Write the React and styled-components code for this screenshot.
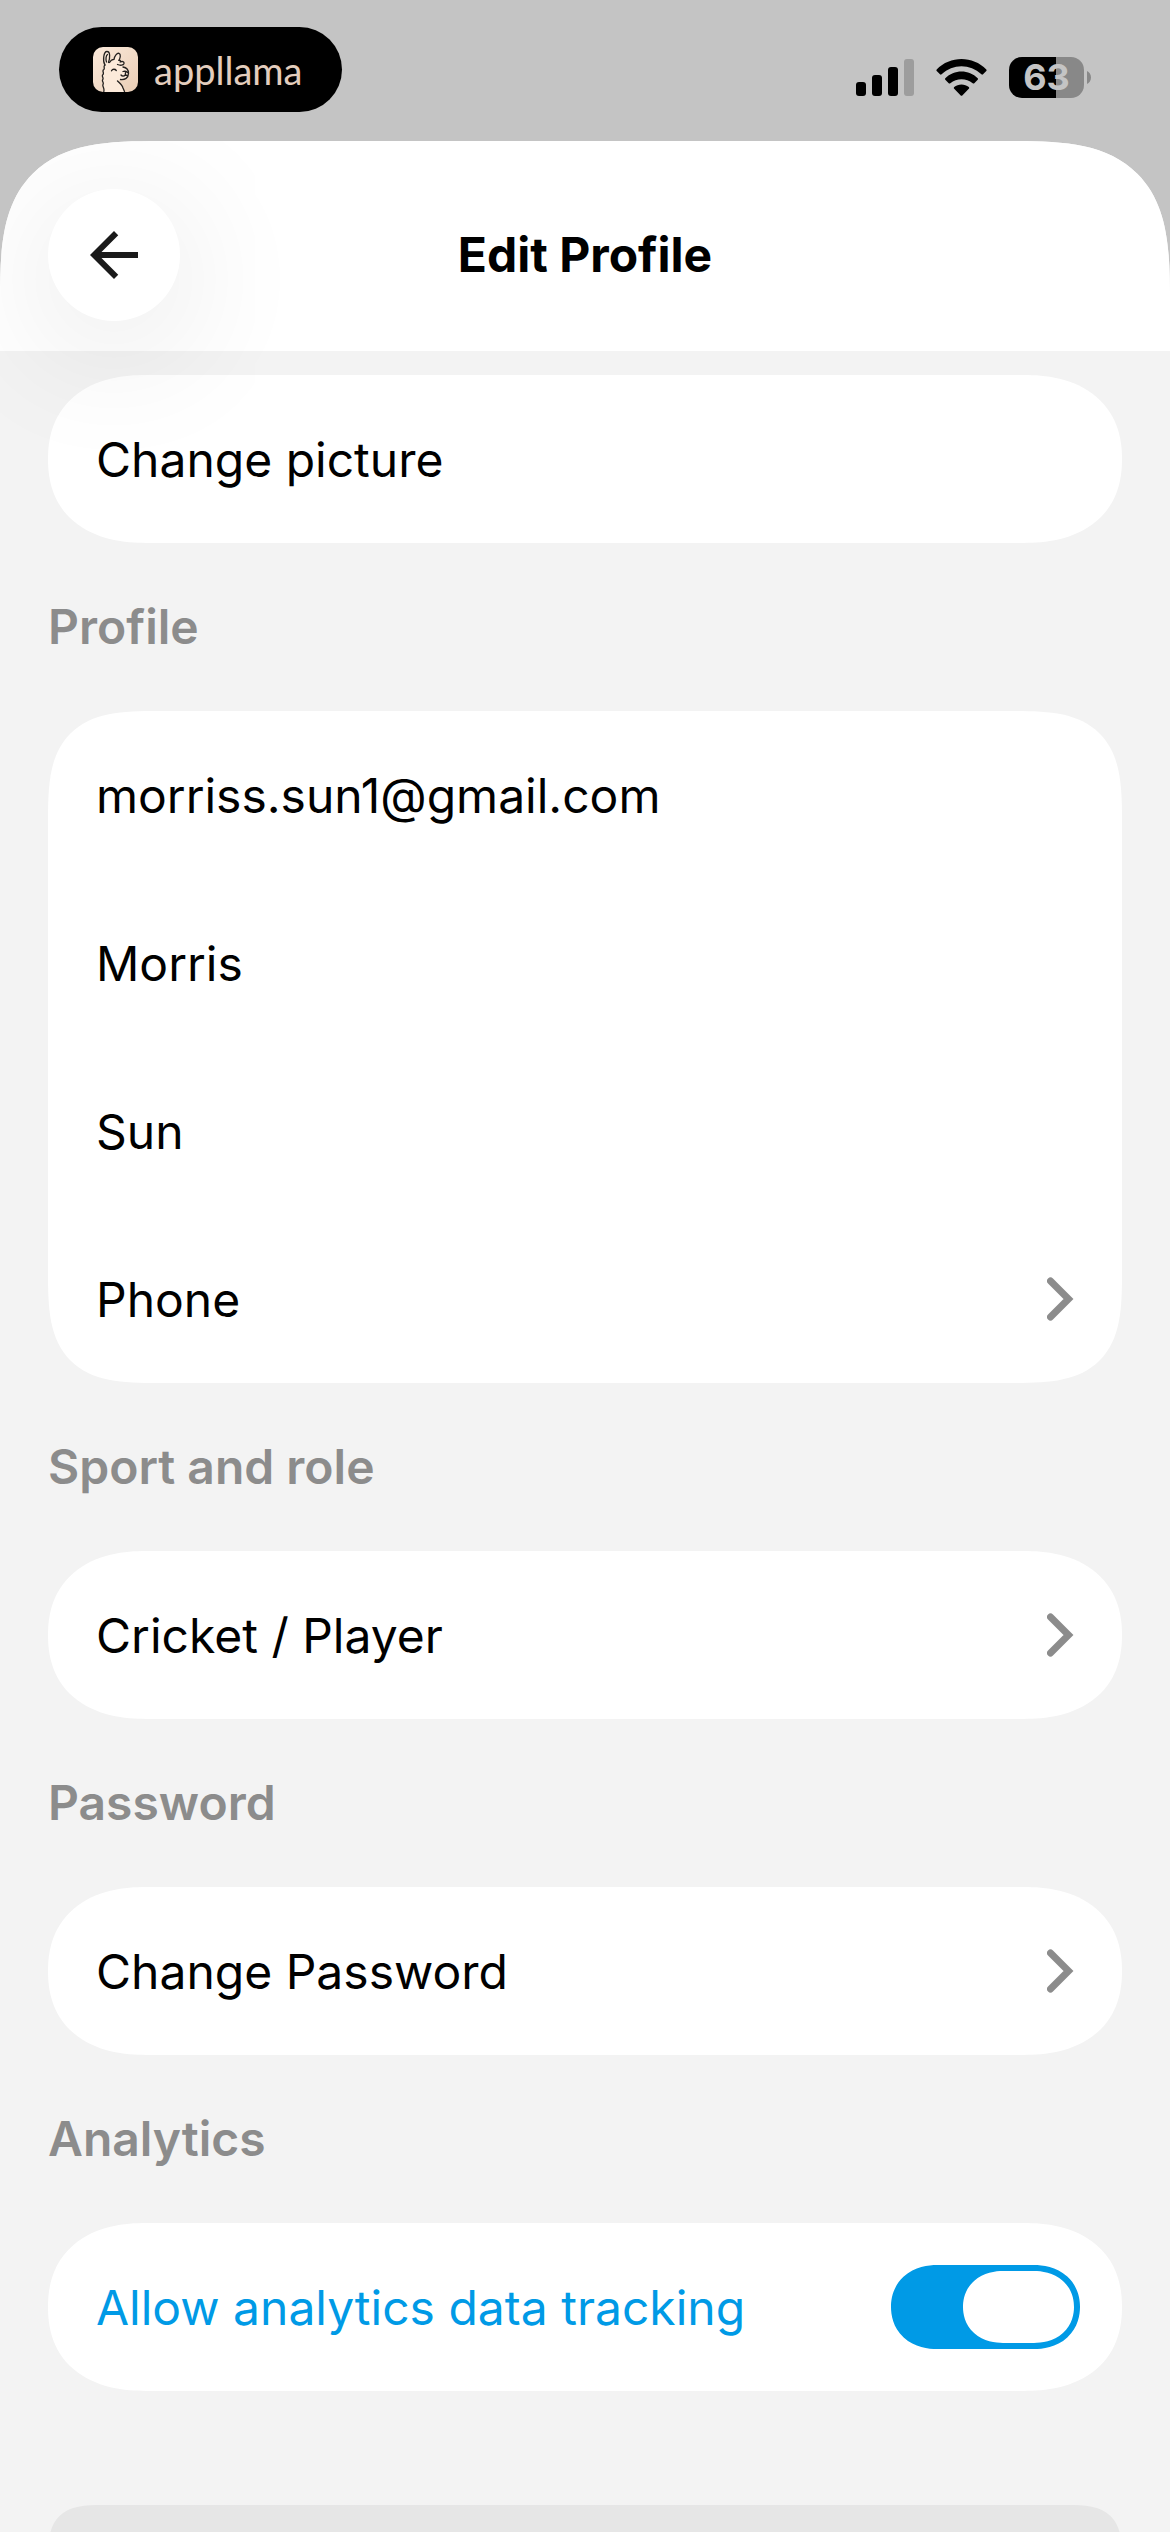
import React, { useState } from "react";
import styled, { createGlobalStyle, css } from "styled-components";

const GlobalStyle = createGlobalStyle`
    * {
        box-sizing: border-box;
    }
    body {
        margin: 0;
        background-color: #c4c4c4;
        font-family: "Inter", "Liberation Sans", sans-serif;
        font-size: 48px;
        color: #000;
    }
    button, input {
        font: inherit;
        color: inherit;
    }
`;

const Screen = styled.div`
    display: flex;
    flex-direction: column;
    height: 100vh;
    overflow: hidden;
`;

const StatusBar = styled.div`
    display: flex;
    flex-shrink: 0;
    align-items: flex-start;
    justify-content: space-between;
    height: 141px;
    padding: 27px 79px 0 59px;
`;

const Island = styled.div`
    display: flex;
    align-items: center;
    gap: 16px;
    width: 283px;
    height: 85px;
    padding-left: 34px;
    border-radius: 43px;
    background-color: #000;
`;

const Wordmark = styled.span`
    font-family: "Lato", sans-serif;
    font-size: 38px;
    line-height: 40px;
    color: #e3cdbd;
`;

const StatusIcons = styled.div`
    display: flex;
    align-items: center;
    gap: 22px;
    padding-top: 30px;
`;

const BatteryWrap = styled.div`
    display: flex;
    align-items: center;
    gap: 3px;
`;

const BatteryBody = styled.div`
    display: flex;
    align-items: center;
    justify-content: center;
    width: 75px;
    height: 41px;
    border-radius: 13px;
    background: linear-gradient(to right, #000 63%, #888 63%);
    font-size: 36px;
    font-weight: 700;
    line-height: 41px;
    color: #c4c4c4;
`;

// Corners are iOS style continuous ones, plain round where the browser has no corner-shape
const Sheet = styled.main`
    display: flex;
    flex: 1;
    flex-direction: column;
    min-height: 0;
    overflow: hidden;
    border-radius: 108px 108px 0 0;
    background-color: #f3f3f3;
    @supports (corner-shape: superellipse(1.6)) {
        border-radius: 160px 160px 0 0;
        corner-shape: superellipse(1.6);
    }
`;

const Header = styled.header`
    position: relative;
    z-index: 1;
    display: grid;
    flex-shrink: 0;
    grid-template-columns: 132px 1fr 132px;
    align-items: center;
    padding: 48px 48px 30px;
    background-color: #fff;
`;

const BackButton = styled.button`
    display: flex;
    align-items: center;
    justify-content: center;
    width: 132px;
    height: 132px;
    padding: 0;
    border: none;
    border-radius: 50%;
    background-color: #fff;
    box-shadow: 0 24px 144px rgba(0, 0, 0, 0.12);
`;

const Title = styled.h1`
    margin: 0;
    font-size: 48px;
    font-weight: 700;
    line-height: 60px;
    text-align: center;
`;

const Content = styled.div`
    display: flex;
    flex: 1;
    flex-direction: column;
    min-height: 0;
    padding: 24px 48px;
    overflow: hidden;
`;

const SectionTitle = styled.h2`
    display: flex;
    flex-shrink: 0;
    align-items: center;
    height: 168px;
    margin: 0;
    font-size: 48px;
    font-weight: 600;
    line-height: 60px;
    color: #8c8c8c;
`;

const Card = styled.div`
    flex-shrink: 0;
    overflow: hidden;
    border-radius: 78px;
    background-color: #fff;
    @supports (corner-shape: superellipse(1.3)) {
        border-radius: ${({ $single }) => ($single ? "98px / 84px" : "110px")};
        corner-shape: superellipse(${({ $single }) => ($single ? 1.2 : 1.6)});
    }
`;

const rowStyle = css`
    display: flex;
    align-items: center;
    justify-content: space-between;
    width: 100%;
    height: 168px;
    padding: 0 48px;
    border: none;
    background: none;
    text-align: left;
`;

const RowButton = styled.button`
    ${rowStyle}
`;

const RowInput = styled.input`
    ${rowStyle}
    outline: none;
`;

const ToggleRow = styled.label`
    ${rowStyle}
    padding-right: 42px;
    color: #009ae6;
`;

const Toggle = styled.input`
    display: flex;
    flex-shrink: 0;
    align-items: center;
    justify-content: flex-start;
    width: 189px;
    height: 84px;
    margin: 0;
    padding: 6px;
    appearance: none;
    border-radius: 42px;
    background-color: #c4c4c4;
    @supports (corner-shape: superellipse(1.1)) {
        border-radius: 46px / 42px;
        corner-shape: superellipse(1.1);
    }

    &:checked {
        justify-content: flex-end;
        background-color: #009ae6;
    }

    &::before {
        content: "";
        width: 111px;
        height: 72px;
        border-radius: 36px;
        background-color: #fff;
        @supports (corner-shape: superellipse(1.1)) {
            border-radius: 40px / 36px;
            corner-shape: superellipse(1.1);
        }
    }
`;

const SaveButton = styled.button`
    flex-shrink: 0;
    height: 168px;
    margin-top: 114px;
    border: none;
    border-radius: 36px;
    background-color: #e6e6e6;
    @supports (corner-shape: superellipse(1.6)) {
        border-radius: 55px;
        corner-shape: superellipse(1.6);
    }
`;

const LlamaIcon = () => (
    <svg width="45" height="45" viewBox="0 0 45 45" fill="none" aria-hidden="true">
        <defs>
            <linearGradient id="tile" x1="0" y1="0" x2="1" y2="1">
                <stop offset="0" stopColor="#fbeadb" />
                <stop offset="1" stopColor="#e9cdb5" />
            </linearGradient>
        </defs>
        <rect width="45" height="45" rx="10" fill="url(#tile)" />
        <path
            d="M10 45L10 22L12 18Q9.500 5 14 4.500Q18.500 5 16.500 15L21 12Q24 5 27 7Q28 9 26 13L31 15L30 20Q35.500 22 35.500 26Q35 32 28 33L24 33.500Q29 38 31.500 45z"
            fill="#fceada"
        />
        <g stroke="#24211f" strokeWidth="1.300" strokeLinecap="round" strokeLinejoin="round">
            <path d="M12 18C9.500 14 10.500 4.500 14 4.500C17.500 4.500 17 11 15.500 15.500M13.500 15C12.500 12 13 8.500 14.500 7.500" />
            <path d="M16.500 15.500C17.500 13.500 19 12.500 21 12.300C21.500 9 24 5.800 26 6.300C28.200 7 27.200 11 26 13.300" />
            <path d="M26 13.300C27.500 13 27.800 14.500 27.200 15C29 14 31.500 14.500 31 16.500C30.500 18.300 27.500 18.800 24.500 17.500" />
            <path d="M12 18C9.800 19.500 12.300 21 10.800 22.500C8.500 24 11.500 25.500 10 27.500C8 29 11 30.500 9.800 32.500C8.300 34 11.300 35.500 10 37.500C9 39.500 11.800 40.500 10.800 44.500" />
            <path d="M18.500 23.800C19.500 21.800 22 21.800 23.300 23.500" />
            <path d="M30 20C33.500 20.500 35.500 23 35.500 26.500C35.300 31 32 33 27.500 32.500M30 24.500C31.500 24 33.500 24.500 34.500 25.500M32.500 25.500L32.300 28C31 29.500 29 29.300 28 28M32.300 28L34.500 28.500" />
            <path d="M24.500 34C28 37 29.500 38.500 30 41L31.500 44.500" />
        </g>
    </svg>
);

const SignalIcon = () => (
    <svg width="58" height="37" viewBox="0 0 58 37" aria-hidden="true">
        <rect x="0" y="23" width="10" height="14" rx="3" />
        <rect x="16" y="16" width="10" height="21" rx="3" />
        <rect x="32" y="8" width="10" height="29" rx="3" />
        <rect x="48" y="0" width="10" height="37" rx="3" fill="#9d9d9d" />
    </svg>
);

const WifiIcon = () => (
    <svg width="51" height="37" viewBox="0 0 51 37" aria-hidden="true">
        <path d="M0.700 10.500C14-3.500 37-3.500 50.300 10.500Q51 11.300 50.300 12L47 15.300Q46.200 16 45.400 15.300C34 4.600 17 4.600 5.600 15.300Q4.800 16 4 15.300L0.700 12Q0 11.300 0.700 10.500z" />
        <path d="M9.300 19.300C18 10.300 33 10.300 41.700 19.300Q42.400 20 41.700 20.800L38.300 24.200Q37.500 25 36.700 24.200C30.300 18.800 20.700 18.800 14.300 24.200Q13.500 25 12.700 24.200L9.300 20.800Q8.600 20 9.300 19.300z" />
        <path d="M18.200 28.100C22.200 24.500 28.800 24.500 32.800 28.100Q33.600 28.900 32.800 29.700L26.300 36.400Q25.500 37.200 24.700 36.400L18.200 29.700Q17.400 28.900 18.200 28.100z" />
    </svg>
);

const BatteryCap = () => (
    <svg width="4" height="13" viewBox="0 0 4 13" fill="#888" aria-hidden="true">
        <path d="M0 0c2 1 4 3 4 6.500S2 12 0 13z" />
    </svg>
);

const BackIcon = () => (
    <svg width="48" height="48" viewBox="0 0 16 16" fill="#1a1a1a" aria-hidden="true">
        <path d="M16 7H3.830l5.590-5.590L8 0 0 8l8 8 1.410-1.410L3.830 9H16V7z" />
    </svg>
);

const Chevron = () => (
    <svg width="27" height="44" viewBox="0 0 27 44" fill="none" aria-hidden="true">
        <path d="M3.500 4l18 18-18 18" stroke="#8c8c8c" strokeWidth="7" strokeLinecap="round" />
    </svg>
);

const LinkRow = ({ text }) => (
    <Card $single>
        <RowButton type="button">
            {text}
            <Chevron />
        </RowButton>
    </Card>
);

export default () => {
    const [email, setEmail] = useState("morriss.sun1@gmail.com");
    const [firstName, setFirstName] = useState("Morris");
    const [lastName, setLastName] = useState("Sun");
    const [tracking, setTracking] = useState(true);

    return (
        <Screen>
            <GlobalStyle />
            <StatusBar>
                <Island>
                    <LlamaIcon />
                    <Wordmark>appllama</Wordmark>
                </Island>
                <StatusIcons>
                    <SignalIcon />
                    <WifiIcon />
                    <BatteryWrap>
                        <BatteryBody>63</BatteryBody>
                        <BatteryCap />
                    </BatteryWrap>
                </StatusIcons>
            </StatusBar>
            <Sheet>
                <Header>
                    <BackButton type="button" aria-label="Back">
                        <BackIcon />
                    </BackButton>
                    <Title>Edit Profile</Title>
                </Header>
                <Content>
                    <Card $single>
                        <RowButton type="button">Change picture</RowButton>
                    </Card>

                    <SectionTitle>Profile</SectionTitle>
                    <Card>
                        <RowInput type="email" aria-label="Email" value={email} onChange={e => setEmail(e.target.value)} />
                        <RowInput type="text" aria-label="First name" value={firstName} onChange={e => setFirstName(e.target.value)} />
                        <RowInput type="text" aria-label="Last name" value={lastName} onChange={e => setLastName(e.target.value)} />
                        <RowButton type="button">
                            Phone
                            <Chevron />
                        </RowButton>
                    </Card>

                    <SectionTitle>Sport and role</SectionTitle>
                    <LinkRow text="Cricket / Player" />

                    <SectionTitle>Password</SectionTitle>
                    <LinkRow text="Change Password" />

                    <SectionTitle>Analytics</SectionTitle>
                    <Card $single>
                        <ToggleRow>
                            Allow analytics data tracking
                            <Toggle type="checkbox" checked={tracking} onChange={e => setTracking(e.target.checked)} />
                        </ToggleRow>
                    </Card>

                    <SaveButton type="button" aria-label="Save" />
                </Content>
            </Sheet>
        </Screen>
    );
};
